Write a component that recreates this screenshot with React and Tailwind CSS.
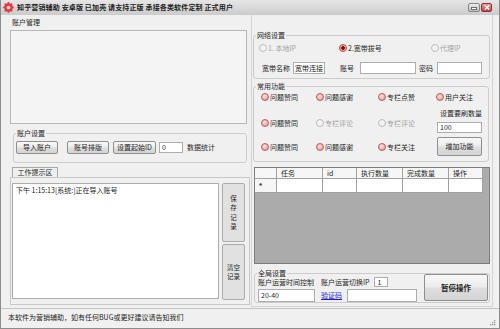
import React from "react";

const Circle = ({ kind }) => {
  if (kind === "off")
    return <span className="w-[8px] h-[8px] shrink-0 rounded-full border border-[#bcbcbc] bg-[#f3f3f3]" />;
  if (kind === "checked")
    return (
      <span className="w-[8px] h-[8px] shrink-0 rounded-full border border-[#b04848] bg-[radial-gradient(circle,#8a1414_0,#8a1414_38%,#f0a8a8_48%,#f6c8c8_100%)]" />
    );
  return (
    <span className="w-[8px] h-[8px] shrink-0 rounded-full border border-[#c05858] bg-[radial-gradient(circle_at_40%_35%,#fde6e6,#e68888)]" />
  );
};

const Radio = ({ label, kind = "on", className = "" }) => (
  <div className={`flex items-center h-[14px] ${className}`}>
    <Circle kind={kind} />
    <span className={`ml-[1px] whitespace-nowrap ${kind === "off" ? "text-[#a3a3a3]" : "text-[#1e1e1e]"}`}>{label}</span>
  </div>
);

const Btn = ({ className = "", children }) => (
  <div
    className={`flex items-center justify-center rounded-[2px] border border-[#8f8f8f] bg-[linear-gradient(#f8f8f8,#ececec_48%,#dedede_52%,#d4d4d4)] whitespace-nowrap ${className}`}
  >
    {children}
  </div>
);

const Box = ({ className = "", children }) => (
  <div className={`bg-white border border-[#abadb3] flex items-center whitespace-nowrap ${className}`}>{children}</div>
);

const Legend = ({ children }) => (
  <legend className="ml-[2px] px-[1px] leading-[8px] text-[7px] text-[#1e1e1e]">{children}</legend>
);

export default function App() {
  const headers = [
    ["任务", "w-[46px]"],
    ["id", "w-[34px]"],
    ["执行数量", "w-[46px]"],
    ["完成数量", "w-[46px]"],
    ["操作", "w-[34px]"],
  ];
  return (
    <div className="w-[500px] h-[329px] overflow-hidden flex flex-col bg-[#f0f0f0] border-x border-b border-[#8c8c8c] text-[7px] leading-[9px] text-[#1e1e1e] [font-family:'Noto_Sans_CJK_SC','Liberation_Sans',sans-serif]">
      {/* Title bar */}
      <div className="h-[15px] shrink-0 flex items-center bg-[linear-gradient(#e6e6e6,#cbcbcb)]">
        <svg className="ml-[2px] shrink-0" width="11" height="11" viewBox="0 0 20 20">
          {[0, 45, 90, 135, 180, 225, 270, 315].map((a) => (
            <ellipse key={a} cx="10" cy="4.6" rx="2.7" ry="4.4" fill="#e0393f" transform={`rotate(${a} 10 10)`} />
          ))}
          <circle cx="10" cy="10" r="3.4" fill="#f8d4d4" />
        </svg>
        <span className="ml-[3px] font-bold text-[#1c1c1c] whitespace-nowrap tracking-[0.15px]">
          知乎营销辅助 安卓版 已加壳 请支持正版 承接各类软件定制 正式用户
        </span>
        <div className="ml-auto mr-[7px] flex items-center gap-[1px]">
          <div className="w-[12px] h-[9px] rounded-[2px] border border-[#888] bg-[linear-gradient(#ececec,#bcbcbc)] flex items-end justify-center pb-[1px]">
            <div className="w-[6px] h-[3px] bg-white border border-[#6d6d6d]" />
          </div>
          <div className="w-[11px] h-[9px] rounded-[2px] border border-[#8a3434] bg-[linear-gradient(#eba0a0,#c63c3c)] flex items-center justify-center">
            <svg width="6" height="5" viewBox="0 0 6 5">
              <path d="M0.8 0.5 L5.2 4.5 M5.2 0.5 L0.8 4.5" stroke="#fff" strokeWidth="1.3" />
            </svg>
          </div>
        </div>
      </div>

      {/* Body */}
      <div className="flex-1 flex min-h-0">
        {/* Left column */}
        <div className="ml-[9px] w-[240px] flex flex-col">
          <div className="h-[15px] pl-[2px] flex items-center">账户管理</div>
          <div className="w-[237px] h-[94px] border border-[#b8b8b8] bg-[#f4f4f4]" />

          <fieldset className="mt-[5px] ml-[3px] w-[234px] min-w-0 border border-[#cccccc] rounded-[3px] pb-[8px]">
            <Legend>账户设置</Legend>
            <div className="mt-[4px] pl-[2px] flex items-center">
              <Btn className="w-[42px] h-[13px]">导入账户</Btn>
              <Btn className="ml-[9px] w-[42px] h-[13px]">账号排版</Btn>
              <Btn className="ml-[4px] w-[43px] h-[13px]">设置起始ID</Btn>
              <Box className="ml-[3px] w-[24px] h-[11px] px-[2px]">0</Box>
              <span className="ml-[4px]">数据统计</span>
            </div>
          </fieldset>

          <div className="mt-[4px] ml-[2px] w-[46px] h-[10px] border border-[#a8a8a8] border-b-0 bg-[#f0f0f0] flex items-center justify-center">
            工作提示区
          </div>
          <div className="w-[240px] border border-[#c8c8c8] pt-[5px] pb-[4px] pl-[1px] flex">
            <div className="w-[207px] h-[116px] bg-white border border-[#abadb3] pl-[3px] pt-[2px] whitespace-nowrap">
              下午 1:15:13[系统:]正在导入账号
            </div>
            <div className="ml-[3px] w-[23px] flex flex-col">
              <div className="h-[59px] rounded-[2px] border border-[#ababab] bg-[#e1e1e1] flex flex-col items-center justify-center text-[6.5px]">
                <div className="h-[9.5px] leading-[9.5px]">保</div>
                <div className="h-[9.5px] leading-[9.5px]">存</div>
                <div className="h-[9.5px] leading-[9.5px]">记</div>
                <div className="h-[9.5px] leading-[9.5px]">录</div>
              </div>
              <div className="mt-[2px] h-[56px] rounded-[2px] border border-[#ababab] bg-[#e1e1e1] flex flex-col items-center justify-center text-[6.5px]">
                <div className="h-[9.5px] leading-[9.5px] whitespace-nowrap">清空</div>
                <div className="h-[9.5px] leading-[9.5px] whitespace-nowrap">记录</div>
              </div>
            </div>
          </div>
        </div>

        {/* Right column */}
        <div className="ml-[1px] w-[242px] mb-[1px] border-x border-b border-[#d4d4d4] flex flex-col">
          {/* 网络设置 */}
          <fieldset className="mt-[16px] ml-[1px] w-[237px] min-w-0 border border-[#cccccc] rounded-[3px] pb-[4px]">
            <Legend>网络设置</Legend>
            <div className="mt-[2px] pl-[5px] flex">
              <Radio label="1. 本地IP" kind="off" className="w-[80px]" />
              <Radio label="2.宽带拔号" kind="checked" className="w-[92px]" />
              <Radio label="代理IP" kind="off" />
            </div>
            <div className="mt-[7px] pl-[8px] flex items-center h-[12px]">
              <span className="whitespace-nowrap">宽带名称</span>
              <Box className="ml-[3px] w-[32px] h-[12px] px-[1px]">宽带连接</Box>
              <span className="ml-[15px] whitespace-nowrap">账号</span>
              <Box className="ml-[6px] w-[56px] h-[12px]" />
              <span className="ml-[3px] whitespace-nowrap">密码</span>
              <Box className="ml-[4px] w-[45px] h-[12px]" />
            </div>
          </fieldset>

          {/* 常用功能 */}
          <fieldset className="mt-[3px] ml-[1px] w-[236px] min-w-0 border border-[#cccccc] rounded-[3px] pb-[5px]">
            <Legend>常用功能</Legend>
            <div className="pl-[7px] flex">
              <div className="w-[175px] flex flex-col">
                <div className="flex">
                  <Radio label="问题赞同" className="w-[55px]" />
                  <Radio label="问题感谢" className="w-[62px]" />
                  <Radio label="专栏点赞" className="w-[58px]" />
                </div>
                <div className="mt-[12px] flex">
                  <Radio label="问题赞同" className="w-[55px]" />
                  <Radio label="专栏评论" kind="off" className="w-[62px]" />
                  <Radio label="专栏评论" kind="off" className="w-[58px]" />
                </div>
                <div className="mt-[10px] flex">
                  <Radio label="问题赞同" className="w-[55px]" />
                  <Radio label="问题感谢" className="w-[62px]" />
                  <Radio label="专栏关注" className="w-[58px]" />
                </div>
              </div>
              <div className="w-[48px] flex flex-col">
                <Radio label="用户关注" />
                <div className="mt-[5px] ml-[4px] h-[8px] leading-[8px] whitespace-nowrap">设置要刷数量</div>
                <Box className="mt-[5px] ml-[1px] w-[45px] h-[11px] px-[2px]">100</Box>
                <Btn className="mt-[4px] ml-[1px] w-[45px] h-[19px]">增加功能</Btn>
              </div>
            </div>
          </fieldset>

          {/* Table */}
          <div className="mt-[5px] ml-[2px] w-[236px] h-[97px] bg-[#ababab] border border-[#7d7d7d]">
            <div className="flex h-[11px]">
              <div className="w-[22px] bg-[#f6f6f6] border-r border-b border-[#a2a2a2]" />
              {headers.map(([t, w]) => (
                <div key={t} className={`${w} bg-[#f6f6f6] border-r border-b border-[#a2a2a2] pl-[4px] flex items-center`}>
                  {t}
                </div>
              ))}
            </div>
            <div className="flex h-[14px]">
              <div className="w-[22px] bg-[#f6f6f6] border-r border-b border-[#a2a2a2] flex items-center pl-[4px] text-[8px] font-bold [font-family:'Liberation_Sans',sans-serif]">
                *
              </div>
              {headers.map(([t, w]) => (
                <div key={t} className={`${w} bg-white border-r border-b border-[#a2a2a2]`} />
              ))}
            </div>
          </div>

          {/* 全局设置 */}
          <fieldset className="mt-[5px] ml-[2px] w-[236px] min-w-0 border border-[#cccccc] rounded-[3px]">
            <Legend>全局设置</Legend>
            <div className="pl-[3px] flex items-start">
              <div className="flex flex-col">
                <div className="flex items-center h-[10px]">
                  <span className="whitespace-nowrap">账户运营时间控制</span>
                  <span className="ml-[7px] whitespace-nowrap">账户运营切换IP</span>
                  <Box className="ml-[5px] w-[14px] h-[10px] px-[2px]">1</Box>
                </div>
                <div className="mt-[2px] flex items-center h-[13px]">
                  <Box className="w-[57px] h-[13px] px-[2px]">20-40</Box>
                  <span className="ml-[6px] text-[#1a1ae6] underline whitespace-nowrap">验证码</span>
                  <Box className="ml-[5px] w-[70px] h-[13px]" />
                </div>
              </div>
              <Btn className="-mt-[3px] ml-auto mr-[1px] w-[64px] h-[27px] font-bold text-[7.5px]">暂停操作</Btn>
            </div>
          </fieldset>
        </div>
      </div>

      {/* Status bar */}
      <div className="h-[20px] shrink-0 border-t border-[#c4c4c4] flex items-start pt-[4px] pl-[7px]">
        <span className="whitespace-nowrap">本软件为营销辅助，如有任何BUG或更好建议请告知我们</span>
        <svg className="ml-auto mr-[3px] mt-[5px]" width="8" height="8" viewBox="0 0 8 8">
          {[
            [6, 2],
            [4, 4],
            [6, 4],
            [2, 6],
            [4, 6],
            [6, 6],
          ].map(([x, y]) => (
            <rect key={`${x}-${y}`} x={x} y={y} width="1.3" height="1.3" fill="#9a9a9a" />
          ))}
        </svg>
      </div>
    </div>
  );
}
